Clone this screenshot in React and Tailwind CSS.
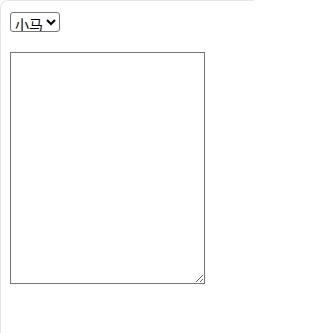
import { useState } from 'react';

const App = () => {
  const [who, setWho] = useState("小马");
  const [text, setText] = useState("");

  return (
    <div className="min-h-[333px] w-[254px] overflow-hidden bg-white border-t border-l border-[#e6e6e6] rounded-tl-lg px-[9px] pt-[11px] font-['Noto_Sans_CJK_SC',sans-serif] text-black">
      <select
        value={who}
        onChange={(e) => setWho(e.target.value)}
        className="block h-[20px] w-[50px] border border-[#767676] rounded-[3px] bg-white text-[14px] leading-none"
      >
        <option value="小马">小马</option>
        <option value="小明">小明</option>
      </select>

      <textarea
        value={text}
        onChange={(e) => setText(e.target.value)}
        className="block mt-[20px] w-[195px] h-[232px] border border-[#767676] p-[2px] text-[13.33px] resize"
      />
    </div>
  );
};

export default App;
